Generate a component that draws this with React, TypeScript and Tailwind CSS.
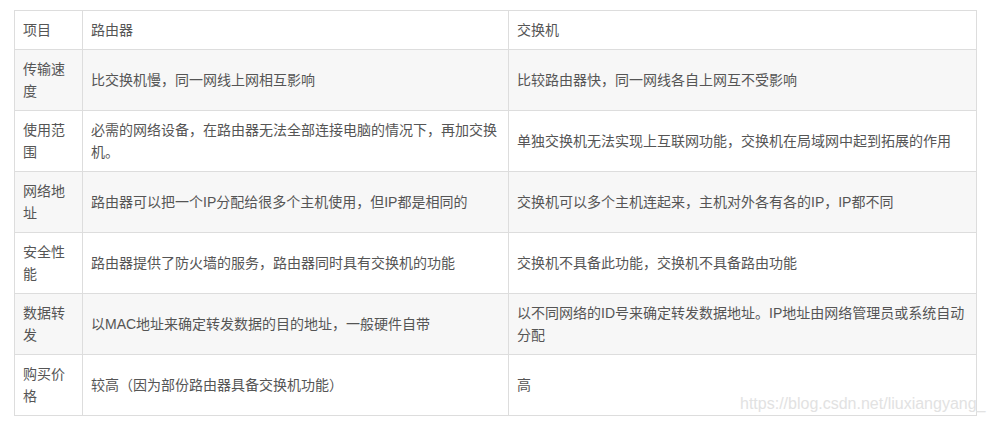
import React from "react";

const rows: [string, string, string][] = [
  ["传输速度", "比交换机慢，同一网线上网相互影响", "比较路由器快，同一网线各自上网互不受影响"],
  ["使用范围", "必需的网络设备，在路由器无法全部连接电脑的情况下，再加交换机。", "单独交换机无法实现上互联网功能，交换机在局域网中起到拓展的作用"],
  ["网络地址", "路由器可以把一个IP分配给很多个主机使用，但IP都是相同的", "交换机可以多个主机连起来，主机对外各有各的IP，IP都不同"],
  ["安全性能", "路由器提供了防火墙的服务，路由器同时具有交换机的功能", "交换机不具备此功能，交换机不具备路由功能"],
  ["数据转发", "以MAC地址来确定转发数据的目的地址，一般硬件自带", "以不同网络的ID号来确定转发数据地址。IP地址由网络管理员或系统自动分配"],
  ["购买价格", "较高（因为部份路由器具备交换机功能）", "高"],
];

export default function App() {
  return (
    <div
      className="relative w-[993px] h-[426px] bg-white pt-[10px] pl-[14px] text-[14px] leading-[22px] text-[#555555]"
      style={{ fontFamily: '"Liberation Sans", "Noto Sans CJK SC", sans-serif' }}
    >
      <table className="border-collapse table-fixed w-[962px]">
        <colgroup>
          <col className="w-[68px]" />
          <col className="w-[426px]" />
          <col className="w-[468px]" />
        </colgroup>
        <thead>
          <tr>
            <td className="border border-[#dddddd] px-2 py-2 align-middle">项目</td>
            <td className="border border-[#dddddd] px-2 py-2 align-middle">路由器</td>
            <td className="border border-[#dddddd] px-2 py-2 align-middle">交换机</td>
          </tr>
        </thead>
        <tbody>
          {rows.map((r, i) => (
            <tr key={i} className={i % 2 === 0 ? "bg-[#f7f7f7]" : "bg-white"}>
              <td className="border border-[#dddddd] px-2 py-2 align-middle">{r[0]}</td>
              <td className="border border-[#dddddd] px-2 py-2 align-middle">{r[1]}</td>
              <td className="border border-[#dddddd] px-2 py-2 align-middle">{r[2]}</td>
            </tr>
          ))}
        </tbody>
      </table>
      <div
        className="absolute left-[740px] top-[394px] text-[16px] leading-[20px] text-[#e2e2e2]"
        style={{ fontFamily: '"Liberation Sans", sans-serif' }}
      >
        https://blog.csdn.net/liuxiangyang_
      </div>
    </div>
  );
}
